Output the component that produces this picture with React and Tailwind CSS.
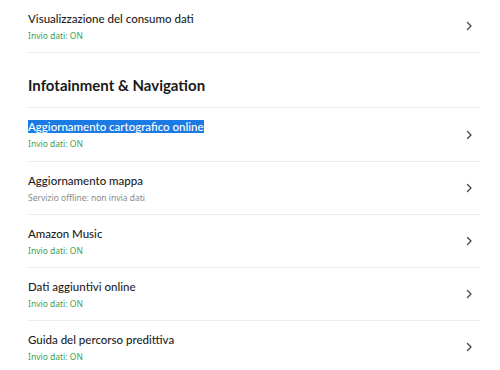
import React from "react";

const Chevron = () => (
  <svg width="8" height="10" viewBox="0 0 8 10" fill="none" className="shrink-0">
    <path d="M2.5 1.5 L6 5 L2.5 8.5" stroke="#444" strokeWidth="1.3" strokeLinecap="round" strokeLinejoin="round" />
  </svg>
);

const Row = ({ title, sub, offline, highlight, height = "h-[53px]" }) => (
  <div className={`${height} flex items-center justify-between border-b border-[#ececec]`}>
    <div className="flex flex-col gap-[3px]">
      <div className="text-[11.5px] leading-[16px] font-medium text-[#1e1e1e]">
        {highlight ? <span className="bg-[#1c7ae4] text-white">{title}</span> : title}
      </div>
      <div
        className={`text-[8.5px] leading-[12px] ${offline ? "text-[#8a8a8a]" : "text-[#3c9e55]"}`}
        style={{ fontFamily: '"Noto Sans", sans-serif' }}
      >
        {sub}
      </div>
    </div>
    <div className="pr-[7px]">
      <Chevron />
    </div>
  </div>
);

const App = () => {
  return (
    <div className="w-[500px] h-[370px] bg-white pl-[28px] pr-[20px] overflow-hidden" style={{ fontFamily: 'Lato, "Noto Sans", sans-serif' }}>
      <Row title="Visualizzazione del consumo dati" sub="Invio dati: ON" />
      <div className="h-[55px] pt-[24px] border-b border-[#ececec]">
        <h2 className="text-[15px] leading-[16px] font-bold text-[#1a1a1a]">Infotainment &amp; Navigation</h2>
      </div>
      <Row title="Aggiornamento cartografico online" sub="Invio dati: ON" highlight height="h-[54px]" />
      <Row title="Aggiornamento mappa" sub="Servizio offline: non invia dati" offline />
      <Row title="Amazon Music" sub="Invio dati: ON" />
      <Row title="Dati aggiuntivi online" sub="Invio dati: ON" />
      <Row title="Guida del percorso predittiva" sub="Invio dati: ON" />
    </div>
  );
};

export default App;
